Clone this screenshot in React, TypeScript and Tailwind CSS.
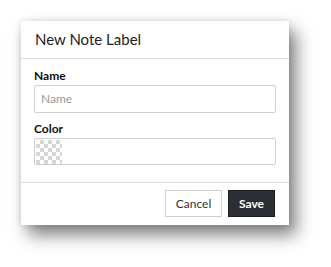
import React from 'react';

export default function App() {
  return (
    <div className="w-[331px] h-[267px] bg-white pt-[21px] pl-[21px]" style={{ fontFamily: 'Lato, "Liberation Sans", sans-serif' }}>
      <div className="w-[268px] h-[204px] bg-white flex flex-col shadow-[7px_10px_16px_rgba(0,0,0,0.5),0_0_6px_rgba(0,0,0,0.12)]">
        <div className="h-[38px] border-b border-[#dcdcdc] pl-[14px] flex items-center">
          <h1 className="text-[15px] text-[#1e2226] leading-none">New Note Label</h1>
        </div>
        <div className="px-[13px] pt-[11px] flex flex-col">
          <label className="text-[12px] font-bold text-[#111] leading-none mb-[3px]">Name</label>
          <div className="h-[28px] border border-[#cfcfcf] rounded-[2px] flex items-center px-[6px]">
            <span className="text-[12px] text-[#9a9a9a]">Name</span>
          </div>
          <label className="text-[12px] font-bold text-[#111] leading-none mt-[10px] mb-[3px]">Color</label>
          <div className="h-[27px] border border-[#cfcfcf] rounded-[2px] flex items-center px-[1px]">
            <div
              className="w-[26px] h-[24px] rounded-[2px] bg-[length:8px_8px] bg-[position:0_0,4px_4px] bg-[linear-gradient(45deg,#d6d6d6_25%,transparent_25%,transparent_75%,#d6d6d6_75%),linear-gradient(45deg,#d6d6d6_25%,#fff_25%,#fff_75%,#d6d6d6_75%)]"
            />
          </div>
        </div>
        <div className="mt-auto h-[43px] border-t border-[#dcdcdc] flex items-center justify-end gap-[6px] pr-[14px] pb-[1px]">
          <button className="h-[27px] w-[57px] border border-[#cfcfcf] bg-white text-[12px] text-[#333]">Cancel</button>
          <button className="h-[27px] w-[47px] bg-[#2b2f33] border border-[#1a1d20] text-[12px] font-bold text-white">Save</button>
        </div>
      </div>
    </div>
  );
}
